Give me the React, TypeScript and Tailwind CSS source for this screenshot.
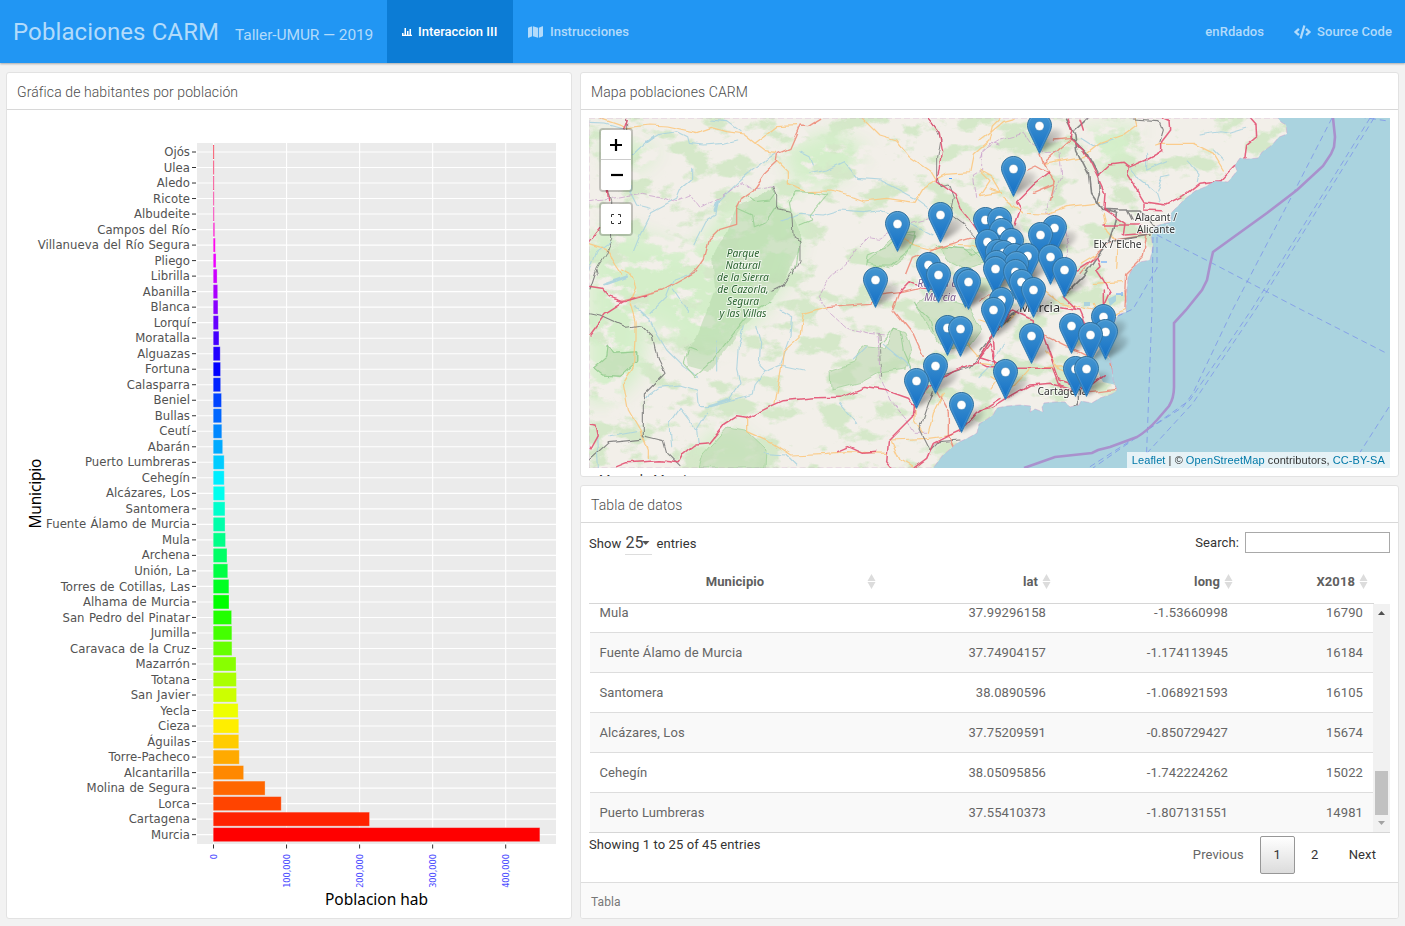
import React from "react";
import { FaMap, FaCode } from "react-icons/fa";

const towns: [string, number][] = [
  ["Ojós", 500], ["Ulea", 881], ["Aledo", 1022], ["Ricote", 1261], ["Albudeite", 1361],
  ["Campos del Río", 2039], ["Villanueva del Río Segura", 2866], ["Pliego", 3847], ["Librilla", 5302],
  ["Abanilla", 6122], ["Blanca", 6499], ["Lorquí", 7096], ["Moratalla", 7887], ["Alguazas", 9531],
  ["Fortuna", 9985], ["Calasparra", 10178], ["Beniel", 11318], ["Bullas", 11518], ["Ceutí", 11787],
  ["Abarán", 12964], ["Puerto Lumbreras", 14981], ["Cehegín", 15022], ["Alcázares, Los", 15674],
  ["Santomera", 16105], ["Fuente Álamo de Murcia", 16184], ["Mula", 16790], ["Archena", 18846],
  ["Unión, La", 19907], ["Torres de Cotillas, Las", 21471], ["Alhama de Murcia", 21612],
  ["San Pedro del Pinatar", 25167], ["Jumilla", 25547], ["Caravaca de la Cruz", 25633],
  ["Mazarrón", 31207], ["Totana", 31639], ["San Javier", 31905], ["Yecla", 34092], ["Cieza", 34988],
  ["Águilas", 35005], ["Torre-Pacheco", 35676], ["Alcantarilla", 41622], ["Molina de Segura", 70964],
  ["Lorca", 93079], ["Cartagena", 213943], ["Murcia", 447182],
];

const STEP = 15.515;
const K = 73.05 / 100000;

function Chart() {
  return (
    <svg width="564" height="808" viewBox="7 110 564 808" className="block" fontFamily="'DejaVu Sans', sans-serif">
      <rect x="197" y="143" width="359" height="701" fill="#ebebeb" />
      {[0, 1, 2, 3, 4].map((i) => (
        <g key={i}>
          <path d={`M${213.5 + i * 73.05} 143V844`} stroke="#fff" strokeWidth="1.1" />
          <path d={`M${213.5 + i * 73.05} 844.5v4`} stroke="#333" strokeWidth="1" />
          <text transform={`translate(${216.6 + i * 73.05} 854) rotate(-90)`} textAnchor="end" fontSize="8.2" fill="#4d4dff">
            {i === 0 ? "0" : `${i}00,000`}
          </text>
        </g>
      ))}
      {towns.map(([name], i) => {
        const y = 152 + i * STEP;
        return <path key={name} d={`M197 ${y}H556`} stroke="#fff" strokeWidth="1.1" />;
      })}
      {towns.map(([name, v], i) => {
        const y = 152 + i * STEP;
        return (
          <g key={name}>
            <rect x="213.2" y={y - 7} width={Math.max(v * K, 0.9)} height="14" fill={`hsl(${(44 - i) * 8} 100% 50%)`} stroke="#ebebeb" strokeOpacity=".4" strokeWidth=".8" />
            <path d={`M192 ${y}h4`} stroke="#333" strokeWidth="1" />
            <text x="190" y={y + 4.1} textAnchor="end" fontSize="11.69" letterSpacing=".03" wordSpacing=".6" fill="#525252">{name}</text>
          </g>
        );
      })}
      <g fontFamily="'Noto Sans', sans-serif" fontSize="15.5" fill="#000">
        <text transform="translate(41 528.5) rotate(-90)" textLength="70" lengthAdjust="spacing">Municipio</text>
        <text x="325" y="905" textLength="103" lengthAdjust="spacing">Poblacion hab</text>
      </g>
    </svg>
  );
}

const pins: [number, number][] = [
  [538, 46], [460, 175], [241, 313], [376, 330], [418, 330], [112, 340], [582, 352], [424, 363],
  [541, 373], [455, 392], [382, 394], [412, 424], [430, 428], [462, 438], [503, 436], [571, 441],
  [410, 458], [468, 462], [205, 465], [406, 475], [613, 480], [466, 485], [235, 493], [47, 508],
  [317, 510], [325, 514], [484, 516], [520, 540], [424, 568], [400, 600], [730, 621], [634, 646],
  [262, 652], [301, 655], [736, 666], [691, 673], [514, 676], [227, 766], [647, 775], [679, 775],
  [436, 786], [169, 811], [304, 883],
];

const LAND =
  "M589 118H1278L1281 122 1286 125 1287 134 1279 137 1272 145 1262 152 1258 158 1247 159 1240 158 1235 165 1237 171 1228 182 1215 181 1205 187 1195 191 1185 199 1178 206 1171 213 1171 222 1162 224 1154 227 1151 237 1153 247 1150 260 1140 262 1133 268 1128 277 1127 290 1126 312 1118 315 1113 325 1108 340 1107 352 1112 365 1113 380 1117 390 1112 394 1100 398 1092 403 1081 401 1079 405 1070 407 1065 402 1055 402 1044 403 1042 407 1043 412 1035 409 1030 412 1031 406 1020 405 1007 406 997 408 993 415 987 419 979 424 977 433 968 438 957 443 949 450 942 456 937 463 933 468H589Z";

type Line = { c: string; w: number; d: string; o?: number; dash?: string };

// Roads, rivers and borders of the north-western tile group
const northWest: Line[] = [
  { c: "#aad3df", w: 4, d: "M27 175L75 177 140 195 M160 270L200 232 240 208 290 200 320 215 325 235 370 240 430 235 470 225 M395 165L440 170 480 200 M590 265L550 290 500 330 440 385 415 410 408 450 375 470 340 540 M335 310L335 345 300 375 290 400 215 440 180 510 160 560 M660 260L690 275 700 300 M690 325L740 315 790 290 830 340 900 345 960 375 1005 400 1045 430 M600 470L660 445 730 450 780 435 850 440 900 435 960 460 1060 510 M27 625L50 560 90 530 M210 430L170 420 150 380 150 320" },
  { c: "#aad3df", w: 10, d: "M202 230L222 214 M405 440L412 410" },
  { c: "#c99bcb", w: 3, dash: "16 7", d: "M27 410L70 405 150 390 190 385 240 395 280 410 330 390 360 430 420 400 460 370 490 350 520 372 580 362 M1260 240L1235 232 1205 265 1205 315 1180 330 1190 400 M760 630L800 600 830 550 865 515 900 520 950 490 1000 470 1060 455" },
  { c: "#fcc77e", w: 4.5, d: "M60 160L140 188 210 180 260 183 350 203 395 187 440 200 490 207 525 235 555 257 590 262 M525 235L590 185 650 182 M592 288L625 320 625 360 680 380 750 378 800 390 850 408 920 400 1005 412 1030 370 1065 345 M850 160L900 210 950 225 990 275 1055 320 1070 345 M1070 340L1100 325 1170 320 1180 270 1230 225 1240 180 1260 160 M1260 385L1200 395 1230 350 1200 320 M1060 555L1000 540 950 510 M27 535L75 550 105 600 125 630 M1055 555L1110 540 1200 545" },
  { c: "#8fca8a", w: 4, o: 0.7, d: "M505 390L530 410 570 405 585 385 575 365 M590 425L560 470 520 485 515 450 470 430 M630 435L625 410 650 380 700 382 740 390 715 420 690 450 695 465 660 480 M660 520L650 600 640 630 M860 600L865 570 925 545 965 505 1005 500 990 550 930 600 880 600 M1070 545L1150 550 1180 570 1220 560" },
  { c: "#777", w: 3.5, d: "M578 362L590 390 590 430 635 440 640 520 660 530 660 590 640 630 M140 160V195 M82 375L92 410 95 520 75 570 50 610 55 630 M1045 160L1068 190 1080 220 1070 280 1070 330 1080 365 1105 360 1120 400 1110 450 1150 480 1190 525" },
  { c: "#ee8a78", w: 5, d: "M725 160L690 182 660 180 630 250 595 265 592 290 550 330 520 375 485 400 470 430 470 475 420 490 385 525 370 580 350 610 330 630 M1260 505L1170 520 1070 550 1000 580 980 630" },
  { c: "#e34d70", w: 5, d: "M142 160L130 195 M82 375L86 410 M62 485L27 530 M1045 160L1075 200 1085 260 1078 310 1068 350 1125 390 1140 430 1165 460 1200 510" },
];

// North-eastern tile group
const northEast: Line[] = [
  { c: "#aad3df", w: 4, d: "M450 170L480 210 500 225 530 250 538 275 M500 130L500 180 560 155 M530 240L545 200 570 195 M625 150L660 190 655 215 M660 75L720 65 750 70 800 55 M700 120L730 150 M300 85L340 110 400 90 M0 300L50 330" },
  { c: "#c99bcb", w: 3, dash: "16 7", d: "M0 150L10 120 60 90 130 70 150 100 200 130 240 130 245 200 205 280 200 310 250 330 265 400 260 440" },
  { c: "#fcc77e", w: 4.5, d: "M0 90L40 60 70 35 105 25 M0 180L35 200 65 250 30 240 M70 260L130 310 200 312 260 290 360 278 M190 160L310 140 360 100 430 75 470 45 465 25 M540 100L640 100 700 130 730 180 M545 100L530 105 M200 345L200 370 M340 520L430 515 M300 460L350 430 M410 475L415 400 380 360 370 310" },
  { c: "#ee8a78", w: 5, d: "M178 127L190 160 225 215 212 270 M190 160L270 90 M140 180L165 168 205 190 M160 250L220 225 M300 490L350 430 400 390 510 375 M500 380L490 440 460 470 440 490 435 595 M220 90L275 85" },
  { c: "#777", w: 6, d: "M260 25L285 75 290 120 325 190 332 250 365 298 420 300 480 300 520 345 M270 80L320 130 355 195 358 250 350 280 M285 60L320 28 M365 298L410 310 400 350 385 395 350 440 310 500 255 555 M385 395L510 375 M445 300L460 330" },
  { c: "#777", w: 4, d: "M460 30L540 35 550 60 540 95" },
  { c: "#e34d70", w: 5.5, d: "M265 25L275 60 270 85 310 120 335 165 352 200 375 250 372 298 435 340 430 375 M310 60L300 28 M352 200L390 165 430 160 445 172 440 190 465 230 492 275 560 285 610 260 660 220 720 212 760 170 795 145 800 100 830 75 828 45 810 25 M445 172L500 150 545 125 545 95 572 60 570 35 548 25 M492 280L492 300 550 302 M372 345L430 345 480 345 M435 375L500 370 M290 480L350 440 360 470 350 480 370 510 388 545 370 585 M205 190L160 225 110 275 122 295 105 345" },
];

// South-western tile group
const southWest: Line[] = [
  { c: "#aad3df", w: 4, d: "M165 110L210 150 230 190 260 240 310 290 355 320 M210 130L260 80 280 30 350 5 M280 60L325 130 M410 210L410 300 M490 170L475 230 470 300 480 340 450 385 M530 165L545 220 540 290 555 305 600 285 670 300 M600 120L635 140 630 200 600 280 M555 305L525 345 520 375 390 410 355 410 350 360 300 345 240 352 190 390 M300 415L270 460 275 530 M300 415L350 480 355 520 M350 480L380 430 M550 550L620 555 650 585 M910 220L970 270 1000 300 M780 400L830 460 M90 500L170 485 M55 595L50 500 M820 270L860 230" },
  { c: "#aad3df", w: 10, d: "M70 45L140 20 M385 407L450 387" },
  { c: "#c99bcb", w: 3, dash: "16 7", d: "M770 0L735 40 715 80 740 120 800 175 870 190 915 195 M895 200L900 320 930 390 980 450 1005 490 1040 490" },
  { c: "#8fca8a", w: 4, o: 0.7, d: "M40 295L80 260 85 225 100 250 170 245 170 275 120 320 65 315ZM570 100L500 140 430 230 400 270 380 290 345 320 310 280 325 230 350 240 M1000 100L1050 150 1060 185 M900 220L940 175 960 180 970 245 990 290" },
  { c: "#fcc77e", w: 4.5, d: "M150 100L165 150 165 210 160 290 130 340 145 420 180 480 205 540 205 565 M150 95L170 50 160 20 125 0 M500 445V485L580 520 635 555 740 550 800 545 920 550 M740 110L670 130 660 200 610 245 605 290 585 400 M1045 490L1060 430 1090 370 M1100 190L1165 220 1200 260 M930 510L1045 505 1120 495 M935 515L960 570 1000 593 M1005 410L1005 450 1030 490 M1230 320L1260 340" },
  { c: "#777", w: 4, d: "M27 128L60 135 140 172 185 165 220 200 235 270 255 310 220 345 190 375 190 500 250 515 260 550 300 590 M27 570L85 518 185 508 M640 0L610 45 580 60 M50 0L30 60 M1060 365L1020 480 1050 540 1075 515 1140 510 M1090 315L1170 290 1210 240 1235 200" },
  { c: "#777", w: 3, dash: "14 8", d: "M900 195L905 320" },
  { c: "#ee8a78", w: 5, d: "M130 90L190 75 250 60 350 5 M740 110L870 100 900 75 960 68 M960 68L940 120 1000 195 1030 260 M1070 365L1105 430 1105 495 1120 530 M1260 55L1200 90 M1020 55L965 68" },
  { c: "#e34d70", w: 5.5, d: "M27 52L65 58 85 80 130 95 75 130 27 195 M130 95L200 75 M110 590L140 578 240 572 295 578 310 550 345 522 390 518 435 462 470 440 500 445 570 410 610 392 700 383 780 382 850 352 920 362 985 385 1003 405 1000 440 925 515 920 575 935 593 M28 460L45 462 52 500 30 540 M770 545L805 530 850 550 885 547 M1003 410L1050 350 1120 305 1190 275 1230 220 1250 290 1220 290 1190 275 M1003 593L1040 565 1060 520 1100 500 1145 480 1190 430 1260 385 M960 70L990 38 1020 50 1080 55 M27 360V395" },
];

// South-eastern tile group
const southEast: Line[] = [
  { c: "#fcc77e", w: 4.5, d: "M0 90L60 110 110 70 M100 290L150 235 260 230 340 180 M340 40L360 100 440 60 M30 300L80 230 0 220 M200 180L240 240 310 270 M190 0L240 40 340 60" },
  { c: "#aad3df", w: 4, d: "M0 260L40 220 70 160" },
  { c: "#777", w: 5, d: "M0 180L40 130 90 80 120 60 M295 340L285 345 M295 345V310" },
  { c: "#ee8a78", w: 5, d: "M190 135L260 170 300 185 330 200 M435 0L438 40 M300 310L360 305 410 298 390 220" },
  { c: "#e34d70", w: 5.5, d: "M0 200L30 140 100 60 160 90 160 110 M0 200L60 220 110 235 220 235 245 300 290 305 M40 140L45 210 M0 360L40 350 80 325 150 285 210 280 280 300 330 290 370 260 M190 130L240 270 300 290 M240 50L300 60 330 130 M370 0L370 50 M250 20L290 60" },
];

function Lines({ items }: { items: Line[] }) {
  return (
    <>
      {items.map((l, i) => (
        <path key={i} d={l.d} fill="none" stroke={l.c} strokeWidth={l.w * 0.82} strokeOpacity={l.o ?? 0.88} strokeDasharray={l.dash} strokeLinejoin="round" strokeLinecap="round" />
      ))}
    </>
  );
}

function MapCanvas() {
  const halo = { stroke: "#fff", strokeOpacity: 0.7, strokeWidth: 2, paintOrder: "stroke" as const, textAnchor: "middle" as const };
  return (
    <svg width="801" height="350" viewBox="589 118 801 350" className="block" fontFamily="'Noto Sans', sans-serif">
      <defs>
        <clipPath id="land"><path d={LAND} /></clipPath>
        <filter id="patches" filterUnits="userSpaceOnUse" x="589" y="118" width="801" height="350" colorInterpolationFilters="sRGB">
          <feTurbulence type="fractalNoise" baseFrequency=".028 .045" numOctaves="6" seed="8" />
          <feColorMatrix values="0 0 0 0 .835  0 0 0 0 .91  0 0 0 0 .79  9 0 0 0 -4.8" />
          <feComposite in2="SourceAlpha" operator="in" />
        </filter>
        <filter id="woods" filterUnits="userSpaceOnUse" x="569" y="98" width="801" height="390" colorInterpolationFilters="sRGB">
          <feGaussianBlur in="SourceAlpha" stdDeviation="9" result="region" />
          <feTurbulence type="fractalNoise" baseFrequency=".04 .055" numOctaves="6" seed="3" />
          <feColorMatrix values="0 0 0 0 .83  0 0 0 0 .935  0 0 0 0 .79  0 8 0 0 -2.9" />
          <feComposite in2="region" operator="in" />
        </filter>
        <filter id="wobble" x="-5%" y="-5%" width="110%" height="110%">
          <feTurbulence type="fractalNoise" baseFrequency=".06" numOctaves="2" seed="5" />
          <feDisplacementMap in="SourceGraphic" scale="6" xChannelSelector="R" yChannelSelector="G" />
        </filter>
        <filter id="soft" x="-50%" y="-50%" width="200%" height="200%"><feGaussianBlur stdDeviation="2" /></filter>
        <linearGradient id="pinFill" x2="0" y2="1"><stop stopColor="#4596d0" /><stop offset="1" stopColor="#126fc6" /></linearGradient>
        <linearGradient id="pinEdge" x2="0" y2="1"><stop stopColor="#2e6c97" /><stop offset="1" stopColor="#3883b7" /></linearGradient>
        <linearGradient id="shade" x1="0" y1="1" x2="1" y2="0"><stop stopColor="#000" stopOpacity=".6" /><stop offset="1" stopColor="#000" stopOpacity=".08" /></linearGradient>
        <symbol id="pin" viewBox="0 0 25 41">
          <path d="M12.5.5C5.8.5.5 6 .5 12.6c0 3 1.6 6.2 2.7 8.4L12.5 40.4 21.8 21c1.1-2.2 2.7-5.400 2.7-8.400C24.500 6 19.200.5 12.500.5Z" fill="url(#pinFill)" stroke="url(#pinEdge)" />
          <path d="M12.500 1.600C6.400 1.600 1.600 6.600 1.600 12.600c0 2.800 1.500 5.800 2.600 8L12.500 37.800 20.800 20.600c1.100-2.200 2.600-5.200 2.600-8C23.400 6.600 18.600 1.600 12.500 1.600Z" fill="none" stroke="#fff" strokeOpacity=".12" />
          <circle cx="12.500" cy="13" r="4.500" fill="#fff" stroke="#2e6c97" strokeOpacity=".5" strokeWidth=".7" />
        </symbol>
      </defs>
      <rect x="589" y="118" width="801" height="350" fill="#aad3df" />
      <path d={LAND} fill="#f2efe9" />
      <g clipPath="url(#land)">
        <path d="M589 118H1290V468H589Z" filter="url(#patches)" />
        <path d="M589 225L640 232 690 250 730 205 770 190 800 205 803 230 790 280 750 330 715 350 690 350 650 320 640 375 615 400 589 405ZM780 150L830 130 870 150 840 180 800 190ZM700 440L730 425 765 452 763 468H702ZM1080 130L1140 125 1130 160 1090 170ZM600 130L660 150 640 170 600 160Z" filter="url(#woods)" />
        <g filter="url(#wobble)">
          <path d="M737 205L748 202 772 188 777 205 791 211 800 230 800 250 785 280 773 300 745 325 710 372 688 366 684 347 695 342 715 290 712 256 727 232Z" fill="#b5d9a9" fillOpacity=".55" />
          <path d="M593 368L607 356 608 345 613 353 637 352 637 361 621 376 601 375ZM830 372L855 362 861 345 885 348 893 328 905 333 911 352 905 368 880 372 862 382 831 390ZM867 262L900 232 915 236 905 256 890 268ZM915 305L935 290 950 300 968 305 981 330 970 345 945 350 930 330ZM938 246L973 250 985 262 965 270 950 262ZM703 455L728 427 745 430 766 450 765 468H699Z" fill="#c0dcb4" fillOpacity=".65" stroke="#8fca8a" strokeOpacity=".55" />
        </g>
        <path d="M1100 348L1112 362 1116 385 1103 382 1092 360Z" fill="#aad3df" />
        <path d="M1084 302h6v4h-6zM1092 308l5-2 3 6-5 2zM1108 299l8-4v6l-6 5z" fill="#aad3df" />
        <g filter="url(#wobble)">
          <g transform="translate(580 65) scale(.33333)"><Lines items={northWest} /></g>
          <g transform="translate(980 110) scale(.33333)"><Lines items={northEast} /></g>
          <g transform="translate(580 270) scale(.33333)"><Lines items={southWest} /></g>
          <g transform="translate(980 290) scale(.33333)"><Lines items={southEast} /></g>
        </g>
        <path d="M1101 262h6M1116 294h5M1122 292v4M949 178.500h3" stroke="#4c9dff" />
      </g>
      <path d={LAND} fill="none" stroke="#c99bcb" strokeOpacity=".6" strokeWidth=".8" strokeDasharray="6 3" />
      <g fill="none" stroke="#7c92ea" strokeOpacity=".85" strokeWidth=".9" strokeDasharray="6 4">
        <path d="M1332 118L1295 190 1233 309 1193 393 1183 407 1088 468M1370 118L1252 309 1190 400 1093 468M1374 118L1256 309 1193 403 1147 453M1360 117L1388 121M1157 235L1210 262 1298 308 1388 354M1153 237L1152 309 1146 468M1157 237V268L1133 309 1118 316M1389 407L1350 468" />
      </g>
      <path d="M1333 118L1335 137 1334 147 1331 154 1323 166 1297 190 1267 213 1213 252 1210 265 1207 280 1202 290 1186 310 1174 323V387Q1174 398 1169 406L1157 420Q1147 431 1137 437L1110 447 1098 450 1092 453 1055 457 1024 468" fill="none" stroke="#a991cd" strokeWidth="2.600" />
      <g fontSize="10.300" fontStyle="italic" fill="#2b6330" {...halo}>
        {["Parque", "Natural", "de la Sierra", "de Cazorla,", "Segura", "y las Villas"].map((t, i) => (
          <text key={t} x="743" y={256.500 + i * 12}>{t}</text>
        ))}
      </g>
      <g fontSize="10.300" fontStyle="italic" fill="#7f5a91" {...halo}>
        <text x="940" y="287">Región de</text>
        <text x="940" y="300.500">Murcia</text>
      </g>
      <g fontSize="10.200" fill="#333" {...halo}>
        <text x="1156" y="220.500">Alacant /</text>
        <text x="1156" y="233">Alicante</text>
        <text x="1117.500" y="247.500">Elx / Elche</text>
        <text x="1062.500" y="395">Cartagena</text>
        <text x="1039.500" y="311.500" fontSize="12.800">Murcia</text>
      </g>
      <g filter="url(#soft)" opacity=".75">
        {pins.map(([x, y], i) => (
          <path key={i} transform={`translate(${860 + x / 3} ${110 + y / 3 + 27.500})`} d="M0 0L3-15Q8-24 17-24Q25-23 22-16Q19-11 12-7Z" fill="url(#shade)" />
        ))}
      </g>
      {pins.map(([x, y], i) => (
        <use key={i} href="#pin" x={Math.round(860 + x / 3 - 12.500)} y={Math.round(110 + y / 3 - 12.700)} width="25" height="41" />
      ))}
    </svg>
  );
}

function Card({ title, className, children }: { title: string; className: string; children: React.ReactNode }) {
  return (
    <section className={`flex flex-col overflow-hidden rounded-[3px] border border-[#e2e2e2] bg-white ${className}`}>
      <h2 className="flex h-[37px] shrink-0 items-center border-b border-[#d8d8d8] px-[10px] pt-[2px] text-[14px] font-light tracking-[0.1px] text-[#4d4d4d]">{title}</h2>
      {children}
    </section>
  );
}

const rows = [
  ["Mula", "37.99296158", "-1.53660998", "16790"],
  ["Fuente Álamo de Murcia", "37.74904157", "-1.174113945", "16184"],
  ["Santomera", "38.0890596", "-1.068921593", "16105"],
  ["Alcázares, Los", "37.75209591", "-0.850729427", "15674"],
  ["Cehegín", "38.05095856", "-1.742224262", "15022"],
  ["Puerto Lumbreras", "37.55410373", "-1.807131551", "14981"],
];

function Sort() {
  return (
    <svg width="9" height="15" viewBox="0 0 9 15" className="shrink-0 fill-[#dcdcdc]">
      <path d="M4.500 0L8.500 7H.5ZM4.500 15L8.500 8H.5Z" />
    </svg>
  );
}

function DataTable() {
  return (
    <div className="flex flex-1 flex-col text-[13px] tracking-[0.1px] text-[#333]">
      <div className="flex h-[41px] items-center justify-between px-2">
        <div className="flex items-center">
          Show
          <span className="mr-1 ml-1 flex h-[22px] w-[27px] items-center border-b border-[#ddd] text-[16px] tracking-normal text-[#444]">
            25
            <svg width="8" height="5" viewBox="0 0 8 5" className="-ml-px shrink-0"><path d="M0 0H7.500L3.750 4Z" fill="#555" /></svg>
          </span>
          entries
        </div>
        <label className="flex items-center gap-[6px] pb-[2px]">
          Search:
          <input className="h-[21px] w-[145px] border border-[#a9a9a9] bg-white" />
        </label>
      </div>
      <div className="ml-2 w-[785px] border-b border-[#d6d6d6] text-[#5f5f5f]">
        <div className="grid h-[39px] grid-cols-[291px_175px_182px_135px] font-bold">
          <div className="flex pt-[10px] pr-[4px]"><span className="-mt-[2px] flex-1 pl-[14px] text-center">Municipio</span><Sort /></div>
          {["lat", "long", "X2018"].map((h) => (
            <div key={h} className="flex justify-end gap-1 pt-[10px] pr-[4px]"><span className="-mt-[2px]">{h}</span><Sort /></div>
          ))}
        </div>
      </div>
      <div className="mx-2 flex h-[229px] border-b border-[#d6d6d6]">
        <div className="flex w-[784px] flex-col justify-end overflow-hidden pl-px text-[#666]">
          {rows.map((r, i) => (
            <div
              key={r[0]}
              className={`grid h-10 shrink-0 grid-cols-[281px_175px_182px_145px] items-center border-t border-[#ddd] ${i % 2 ? "bg-[#f9f9f9]" : "bg-white"}`}
            >
              <span className="pl-[9.5px]">{r[0]}</span>
              <span className="text-right">{r[1]}</span>
              <span className="text-right">{r[2]}</span>
              <span className="pr-[10px] text-right">{r[3]}</span>
            </div>
          ))}
        </div>
        <div className="flex w-[17px] flex-col items-center bg-[#f1f1f1]">
          <svg width="17" height="17" viewBox="0 0 17 17"><path d="M5 11H12L8.500 7Z" fill="#505050" /></svg>
          <div className="mt-[150px] h-[44px] w-[13px] bg-[#c1c1c1]" />
          <svg width="17" height="17" viewBox="0 0 17 17"><path d="M5 6H12L8.500 10Z" fill="#a3a3a3" /></svg>
        </div>
      </div>
      <div className="flex flex-1 items-start justify-between px-2">
        <span className="pt-[2px]">Showing 1 to 25 of 45 entries</span>
        <div className="mt-[3px] flex h-[38px] items-center">
          <span className="text-[#666]">Previous</span>
          <span className="ml-4 flex h-[38px] w-[35px] items-center justify-center rounded-[2px] border border-[#979797] bg-linear-to-b from-white to-[#dcdcdc]">1</span>
          <span className="w-[40px] text-center">2</span>
          <span className="px-[14px]">Next</span>
        </div>
      </div>
      <div className="flex h-[36px] shrink-0 items-center border-t border-[#ddd] bg-[#fafafa] px-[10px] pt-[3px] text-[12px] text-[#777]">Tabla</div>
    </div>
  );
}

export default function App() {
  return (
    <div className="flex h-[926px] w-[1405px] flex-col overflow-hidden bg-[#f2f2f2] font-['Roboto',sans-serif]">
      <header className="z-10 flex h-[63px] shrink-0 bg-[#2196f3] text-[13px] font-medium text-[#b2dbfb] shadow-[0_1px_2px_rgba(0,0,0,0.3)]">
        <div className="flex w-[387px] items-baseline pt-[15px] pl-[13px] whitespace-nowrap">
          <span className="text-[24px] leading-[34px] font-normal tracking-[0.1px]">Poblaciones CARM</span>
          <span className="ml-4 text-[15.500px] font-normal tracking-[-0.1px]">Taller-UMUR — 2019</span>
        </div>
        <div className="flex w-[126px] items-center gap-[6px] bg-[#0c7cd5] pl-[15px] text-white">
          <svg width="10" height="10" viewBox="0 0 10 10" fill="currentColor">
            <path d="M0 6h1.500v2H0zM2.500 1H4v7H2.500zM5 4h1.500v4H5zM7.500 2H9v6H7.500zM0 7.700h10V9H0z" />
          </svg>
          Interaccion III
        </div>
        <div className="flex items-center gap-[7px] pl-[15px]"><FaMap className="h-[14px] w-[15px]" />Instrucciones</div>
        <div className="flex-1" />
        <div className="flex items-center tracking-[0.08px]">enRdados</div>
        <div className="flex items-center gap-[6px] pr-[13px] pl-[30px] tracking-[0.08px]"><FaCode className="h-[14px] w-[17px]" />Source Code</div>
      </header>
      <main className="flex flex-1 gap-2 px-[6px] pt-[9px] pb-[7px]">
        <Card title="Gráfica de habitantes por población" className="w-[566px]"><Chart /></Card>
        <div className="flex w-[819px] flex-col gap-2">
          <Card title="Mapa poblaciones CARM" className="h-[405px] shrink-0">
            <div className="relative mx-2 mt-2 shrink-0">
              <MapCanvas />
              <div className="absolute top-[10px] left-[10px] flex flex-col rounded border-2 border-black/20 bg-clip-padding">
                <div className="flex h-[30px] w-[30px] items-center justify-center rounded-t-[2px] border-b border-[#ccc] bg-white"><svg width="12" height="12"><path d="M0 6H12M6 0V12" stroke="#000" strokeWidth="2.200" /></svg></div>
                <div className="flex h-[30px] w-[30px] items-center justify-center rounded-b-[2px] bg-white pl-px"><svg width="12" height="12"><path d="M0 6H12" stroke="#000" strokeWidth="2.200" /></svg></div>
              </div>
              <div className="absolute top-[84px] left-[10px] rounded border-2 border-black/20 bg-clip-padding">
                <div className="flex h-[30px] w-[30px] items-center justify-center rounded-[2px] bg-white">
                  <svg width="10" height="10" fill="none" stroke="#333" strokeWidth="1"><path d="M.5 3V.5H3M7 .5H9.500V3M9.500 7V9.500H7M3 9.500H.5V7" /></svg>
                </div>
              </div>
              <div className="absolute right-0 bottom-0 flex h-4 items-center gap-[3px] bg-white/70 px-[5px] font-['Liberation_Sans',sans-serif] text-[11px] tracking-[0.1px] whitespace-pre text-[#333]">
                <span className="text-[#0078a8]">Leaflet</span><span>| ©</span><span className="text-[#0078a8]">OpenStreetMap</span><span>contributors,</span><span className="text-[#0078a8]">CC-BY-SA</span>
              </div>
            </div>
            <div className="shrink-0 px-[18px] pt-[3px] text-[13px] leading-[18px] tracking-[0.1px] text-[#333]">Mapa de Murcia</div>
          </Card>
          <Card title="Tabla de datos" className="flex-1"><DataTable /></Card>
        </div>
      </main>
    </div>
  );
}
